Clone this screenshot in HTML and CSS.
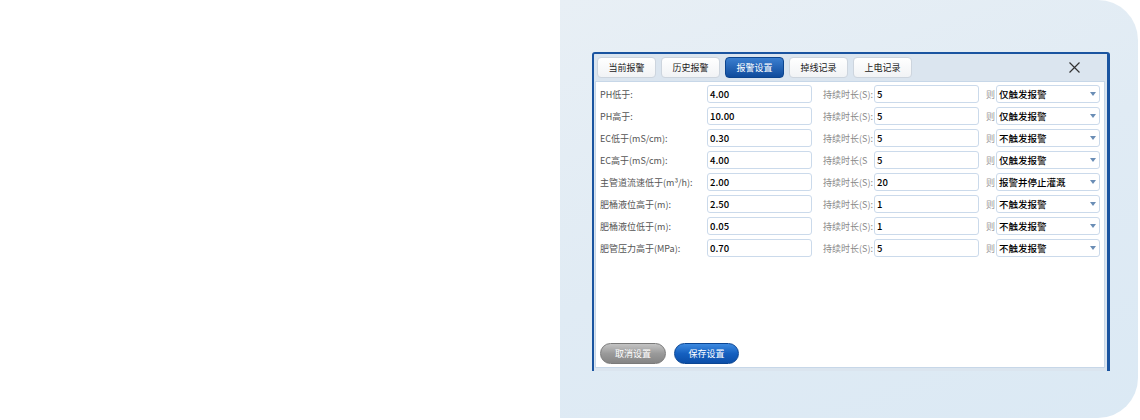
FILE: index.html
```html
<!DOCTYPE html>
<html lang="zh-CN">
<head>
    <meta charset="UTF-8" />
    <title>报警设置</title>
    <link rel="stylesheet" href="styles.css">
</head>
<body>
<div class="page">
    <div class="blank"></div>
    <div class="panel">
        <div class="dialog">
            <!-- Вкладки -->
            <div class="tabs">
                <span class="tab">当前报警</span>
                <span class="tab">历史报警</span>
                <span class="tab active">报警设置</span>
                <span class="tab">掉线记录</span>
                <span class="tab">上电记录</span>
                <span class="close">
                    <svg width="11" height="11" viewBox="0 0 11 11"><path d="M0.5 0.5L10.5 10.5M10.5 0.5L0.5 10.5" stroke="#333" stroke-width="1.2" fill="none"/></svg>
                </span>
            </div>

            <div class="content">
                <div class="rows">
                    <span class="label">PH低于:</span><span class="field">4.00</span><span class="dur">持续时长(S):</span><span class="field">5</span><span class="then">则</span><span class="select">仅触发报警<i class="arrow"></i></span>
                    <span class="label">PH高于:</span><span class="field">10.00</span><span class="dur">持续时长(S):</span><span class="field">5</span><span class="then">则</span><span class="select">仅触发报警<i class="arrow"></i></span>
                    <span class="label">EC低于(mS/cm):</span><span class="field">0.30</span><span class="dur">持续时长(S):</span><span class="field">5</span><span class="then">则</span><span class="select">不触发报警<i class="arrow"></i></span>
                    <span class="label">EC高于(mS/cm):</span><span class="field">4.00</span><span class="dur">持续时长(S</span><span class="field">5</span><span class="then">则</span><span class="select">仅触发报警<i class="arrow"></i></span>
                    <span class="label">主管道流速低于(m³/h):</span><span class="field">2.00</span><span class="dur">持续时长(S):</span><span class="field">20</span><span class="then">则</span><span class="select">报警并停止灌溉<i class="arrow"></i></span>
                    <span class="label">肥桶液位高于(m):</span><span class="field">2.50</span><span class="dur">持续时长(S):</span><span class="field">1</span><span class="then">则</span><span class="select">不触发报警<i class="arrow"></i></span>
                    <span class="label">肥桶液位低于(m):</span><span class="field">0.05</span><span class="dur">持续时长(S):</span><span class="field">1</span><span class="then">则</span><span class="select">不触发报警<i class="arrow"></i></span>
                    <span class="label">肥管压力高于(MPa):</span><span class="field">0.70</span><span class="dur">持续时长(S):</span><span class="field">5</span><span class="then">则</span><span class="select">不触发报警<i class="arrow"></i></span>
                </div>

                <div class="buttons">
                    <span class="btn btn-cancel">取消设置</span>
                    <span class="btn btn-save">保存设置</span>
                </div>
            </div>
        </div>
    </div>
</div>
</body>
</html>
```

FILE: styles.css
```css
body {
    margin: 0;
    background: #fff;
    font-family: "Noto Sans CJK SC", "Noto Sans", sans-serif;
}
.page {
    display: flex;
    height: 420px;
}
.blank {
    width: 560px;
}
.panel {
    width: 578px;
    height: 418px;
    box-sizing: border-box;
    padding: 52px 0 0 32px;
    border-radius: 0 40px 40px 0;
    background: linear-gradient(160deg, #e8eff5 0%, #e0ebf4 50%, #dbe9f4 100%);
}
.dialog {
    width: 518px;
    height: 319px;
    box-sizing: border-box;
    border: 2px solid #1a54a0;
    border-right-width: 3px;
    border-bottom: none;
    border-radius: 3px 3px 0 0;
    background: #dbe5ef;
    display: flex;
    flex-direction: column;
    padding: 3px 0 3px 1px;
}
.tabs {
    display: flex;
    align-items: center;
    gap: 5px;
    height: 21px;
    padding-left: 2px;
    margin-bottom: 3px;
}
.tab {
    width: 59px;
    height: 21px;
    box-sizing: border-box;
    display: flex;
    align-items: center;
    justify-content: center;
    font-size: 9px;
    color: #222;
    background: linear-gradient(#ffffff, #f1f3f5);
    border: 1px solid #cdd5de;
    border-radius: 4px;
}
.tab.active {
    color: #fff;
    border-color: #0c458f;
    background: linear-gradient(#3b7fd0, #0f4b9c);
}
.close {
    margin-left: auto;
    margin-right: 27px;
    display: flex;
}
.content {
    flex: 1;
    margin-right: 2px;
    background: #fff;
    border: 1px solid #c7d7e8;
    padding: 3px 4px 3px 4px;
    display: flex;
    flex-direction: column;
}
.rows {
    display: grid;
    grid-template-columns: 107px 105px 62px 105px 17px 104px;
    grid-auto-rows: 18px;
    row-gap: 4px;
    align-items: center;
}
.label {
    font-size: 9px;
    color: #555;
}
.dur {
    font-size: 9px;
    color: #888;
    padding-left: 11px;
}
.then {
    font-size: 9px;
    color: #999;
    padding-left: 7px;
}
.field,
.select {
    height: 18px;
    box-sizing: border-box;
    border: 1px solid #cbdaeb;
    border-radius: 3px;
    background: #fff;
    font-size: 9.5px;
    font-weight: 500;
    color: #000;
    display: flex;
    align-items: center;
    padding-left: 2px;
}
.select {
    position: relative;
}
.arrow {
    position: absolute;
    right: 3px;
    top: 6px;
    width: 0;
    height: 0;
    border-left: 3.5px solid transparent;
    border-right: 3.5px solid transparent;
    border-top: 4px solid #6a8db5;
}
.buttons {
    margin-top: auto;
    display: flex;
    gap: 8px;
}
.btn {
    width: 66px;
    height: 21px;
    box-sizing: border-box;
    border-radius: 11px;
    display: flex;
    align-items: center;
    justify-content: center;
    font-size: 9px;
    color: #fff;
}
.btn-cancel {
    background: linear-gradient(#c4c4c4, #9a9a9a 50%, #858585);
    border: 1px solid #7a7a7a;
}
.btn-save {
    width: 65px;
    background: linear-gradient(#3d8ae0, #1560c0 50%, #0b4ea8);
    border: 1px solid #0a4593;
}
```
